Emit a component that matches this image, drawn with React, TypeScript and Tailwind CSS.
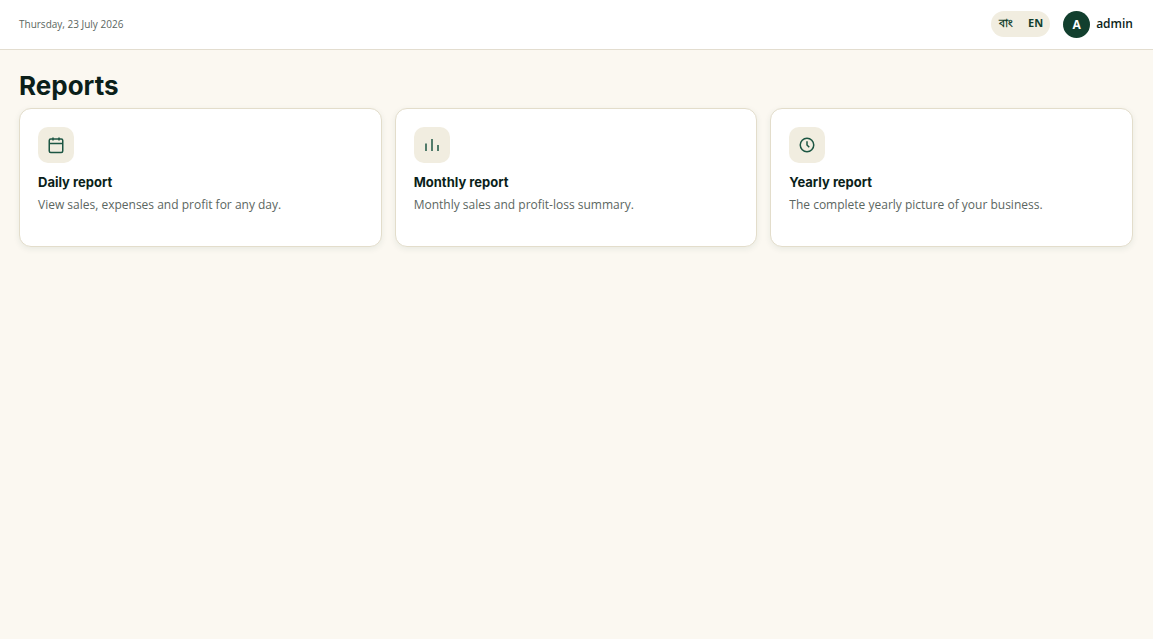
import React from "react";

const iconProps = {
  width: 18,
  height: 18,
  viewBox: "0 0 24 24",
  fill: "none",
  stroke: "currentColor",
  strokeWidth: 2,
};

function CalendarIcon() {
  return (
    <svg {...iconProps}>
      <rect x="3" y="4" width="18" height="18" rx="2" />
      <path d="M3 10h18M8 2v4M16 2v4" />
    </svg>
  );
}

function BarsIcon() {
  return (
    <svg {...iconProps}>
      <path d="M4 20V10M12 20V4M20 20v-8" />
    </svg>
  );
}

function ClockIcon() {
  return (
    <svg {...iconProps}>
      <circle cx="12" cy="12" r="9" />
      <path d="M12 7v5l3 3" />
    </svg>
  );
}

const reports = [
  {
    title: "Daily report",
    text: "View sales, expenses and profit for any day.",
    icon: <CalendarIcon />,
  },
  {
    title: "Monthly report",
    text: "Monthly sales and profit-loss summary.",
    icon: <BarsIcon />,
  },
  {
    title: "Yearly report",
    text: "The complete yearly picture of your business.",
    icon: <ClockIcon />,
  },
];

function Header() {
  return (
    <header className="flex items-center justify-between border-b border-[#e3ddcf] bg-white pl-[19px] pr-5 py-[11px]">
      <p className="pb-[2px] text-[10px] leading-4 text-[#5b6661]">Thursday, 23 July 2026</p>

      <div className="flex items-start gap-[13px]">
        {/* Language switch */}
        <div className="flex h-[26px] items-center rounded-full bg-[#f1ede0] pb-[2px] text-[11px] font-bold leading-4 text-[#123f2e]">
          <button type="button" className="pl-2 pr-[7px]">
            বাং
          </button>
          <button type="button" className="pl-2 pr-[7px]">
            EN
          </button>
        </div>

        {/* User */}
        <div className="flex items-center gap-[6px]">
          <span className="flex size-[27px] items-center justify-center rounded-full bg-[#123f2e] text-xs font-bold text-white">
            A
          </span>
          <span className="pb-[2px] text-xs font-semibold leading-4 text-[#0b1f1a]">
            admin
          </span>
        </div>
      </div>
    </header>
  );
}

function App() {
  return (
    <div className="min-h-screen bg-[#fbf8f1] font-['Open_Sans','Noto_Sans',sans-serif]">
      <Header />

      <main className="pl-[19px] pr-5 pt-5">
        <h1 className="font-['Inter',sans-serif] text-[26px] font-bold leading-8 text-[#0b1f1a]">
          Reports
        </h1>

        <div className="mt-[6px] grid grid-cols-1 gap-[13px] sm:grid-cols-3">
          {reports.map((report) => (
            <a
              key={report.title}
              href="#"
              className="rounded-xl border border-[#e3ddcb] bg-white px-[18px] pt-[18px] pb-[31px] shadow-[0_2px_6px_rgba(18,63,46,0.08)]"
            >
              <span className="flex size-9 items-center justify-center rounded-[10px] bg-[#f1ede0] text-[#1c5643]">
                {report.icon}
              </span>
              <h2 className="mt-[9px] font-['Inter',sans-serif] text-[13px] font-bold leading-5 text-[#0b1f1a]">
                {report.title}
              </h2>
              <p className="mt-[3px] text-xs leading-5 text-[#5b6661]">{report.text}</p>
            </a>
          ))}
        </div>
      </main>
    </div>
  );
}

export default App;
